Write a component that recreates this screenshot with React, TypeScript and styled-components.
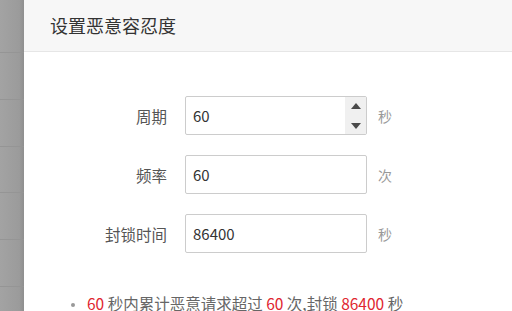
import styled, { createGlobalStyle } from 'styled-components';

const GlobalStyle = createGlobalStyle`
  html, body {
    margin: 0;
    padding: 0;
    background: #fff;
  }
  body {
    font-family: "Noto Sans CJK SC", "Noto Sans", sans-serif;
  }
`;

const Page = styled.div`
  display: flex;
  width: 512px;
  height: 311px;
  overflow: hidden;
`;

const Backdrop = styled.div`
  width: 24px;
  flex-shrink: 0;
  display: flex;
  flex-direction: column;
  background: linear-gradient(to right, #a3a3a3, #9b9b9b 80%, #8f8f8f);
`;

const BackdropRow = styled.div<{ h: number }>`
  height: ${p => p.h}px;
  flex-shrink: 0;
  border-bottom: 1px solid #959595;
  box-sizing: border-box;
`;

const Dialog = styled.div`
  flex: 1;
  display: flex;
  flex-direction: column;
  background: #fff;
  border-top-left-radius: 3px;
`;

const Header = styled.div`
  height: 52px;
  box-sizing: border-box;
  padding-left: 26px;
  background: #f7f7f7;
  border-bottom: 1px solid #e6e6e6;
  font-size: 18px;
  line-height: 51px;
  color: #333;
`;

const Body = styled.div`
  padding-top: 44px;
  display: flex;
  flex-direction: column;
  gap: 20px;
`;

const Row = styled.div`
  display: flex;
  align-items: center;
  height: 39px;
`;

const Label = styled.div`
  width: 143px;
  text-align: right;
  font-size: 15.5px;
  color: #555;
`;

const InputBox = styled.div`
  margin-left: 18px;
  width: 182px;
  height: 39px;
  box-sizing: border-box;
  border: 1px solid #ccc;
  border-radius: 2px;
  display: flex;
  background: #fff;
`;

const Value = styled.div`
  flex: 1;
  padding-left: 7px;
  font-size: 15px;
  line-height: 37px;
  color: #333;
`;

const Spinner = styled.div`
  width: 21px;
  background: #f0f0f0;
  display: flex;
  flex-direction: column;
  justify-content: space-between;
  align-items: center;
  padding: 6px 0 5px;
  box-sizing: border-box;
`;

const Arrow = styled.div<{ down?: boolean }>`
  width: 0;
  height: 0;
  border-left: 5px solid transparent;
  border-right: 5px solid transparent;
  ${p => (p.down ? 'border-top: 6px solid #4a4a4a;' : 'border-bottom: 6px solid #4a4a4a;')}
`;

const Unit = styled.div`
  margin-left: 11px;
  font-size: 14px;
  color: #999;
`;

const Notes = styled.ul`
  list-style: none;
  margin: 39px 0 0;
  padding: 0;
`;

const Note = styled.li`
  position: relative;
  padding-left: 63px;
  font-size: 15.5px;
  line-height: 22px;
  color: #666;
  white-space: nowrap;

  &::before {
    content: '';
    position: absolute;
    left: 47px;
    top: 11px;
    width: 4px;
    height: 4px;
    border-radius: 50%;
    background: #999;
  }
`;

const Hl = styled.span`
  color: #e0262f;
`;

const rows = [
  { label: '周期', value: '60', unit: '秒', spin: true },
  { label: '频率', value: '60', unit: '次', spin: false },
  { label: '封锁时间', value: '86400', unit: '秒', spin: false },
];

const stripes = [53, 47, 47, 46, 47, 47, 47];

export default function App() {
  return (
    <>
      <GlobalStyle />
      <Page>
        <Backdrop>
          {stripes.map((h, i) => (
            <BackdropRow key={i} h={h} />
          ))}
        </Backdrop>
        <Dialog>
          <Header>设置恶意容忍度</Header>
          <Body>
            {rows.map(r => (
              <Row key={r.label}>
                <Label>{r.label}</Label>
                <InputBox>
                  <Value>{r.value}</Value>
                  {r.spin && (
                    <Spinner>
                      <Arrow />
                      <Arrow down />
                    </Spinner>
                  )}
                </InputBox>
                <Unit>{r.unit}</Unit>
              </Row>
            ))}
          </Body>
          <Notes>
            <Note>
              <Hl>60</Hl> 秒内累计恶意请求超过 <Hl>60</Hl> 次,封锁 <Hl>86400</Hl> 秒
            </Note>
          </Notes>
        </Dialog>
      </Page>
    </>
  );
}
